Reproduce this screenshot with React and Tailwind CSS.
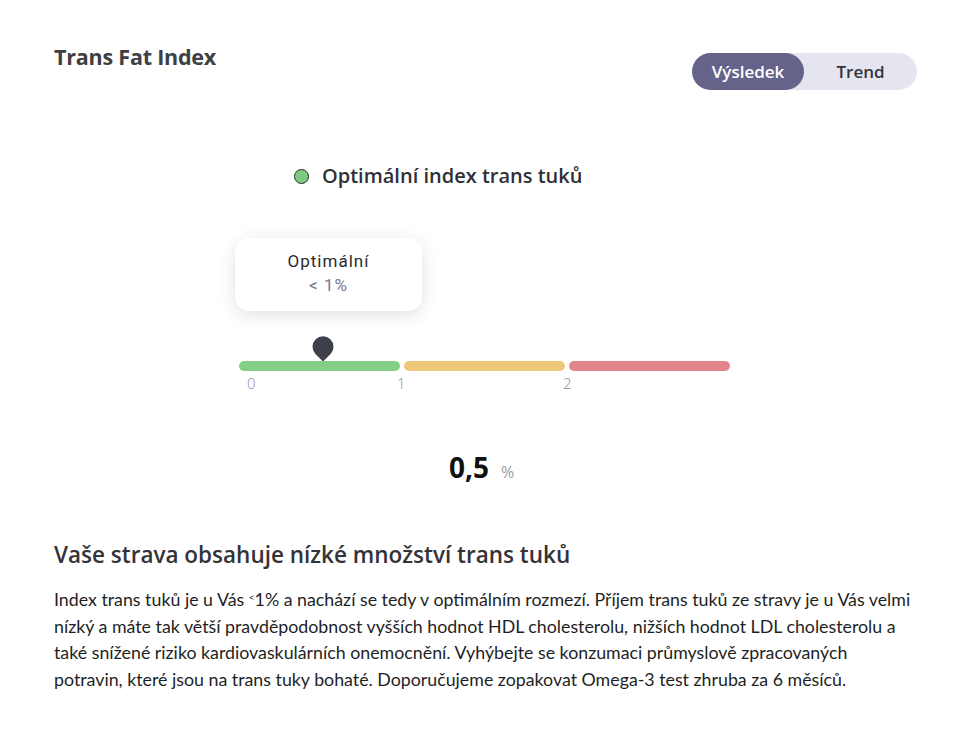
import { useState } from "react";

const segments = [
  { color: "bg-[#84cf86]", label: "0" },
  { color: "bg-[#efc97b]", label: "1" },
  { color: "bg-[#e2868b]", label: "2" },
];

function Toggle() {
  const [tab, setTab] = useState("result");
  return (
    <div className="flex h-[37px] w-[225px] items-center rounded-full bg-[#e4e5ee] font-['Open_Sans',sans-serif] text-[17px] font-semibold">
      <button
        onClick={() => setTab("result")}
        className={`h-full w-[112px] rounded-full ${tab === "result" ? "bg-[#65638a] text-white" : "text-[#34343c]"}`}
      >
        Výsledek
      </button>
      <button
        onClick={() => setTab("trend")}
        className={`h-full flex-1 rounded-full ${tab === "trend" ? "bg-[#65638a] text-white" : "text-[#34343c]"}`}
      >
        Trend
      </button>
    </div>
  );
}

function Pin() {
  return (
    <svg width="28" height="32" viewBox="0 0 28 32" className="block">
      <path
        d="M14 30 L5.5 21.5 A11.5 11.5 0 1 1 22.5 21.5 Z"
        fill="#3d3f4b"
        stroke="#ffffff"
        strokeWidth="2"
        strokeLinejoin="miter"
      />
    </svg>
  );
}

function Scale() {
  return (
    <div className="ml-[185px] w-[491px]">
      <div className="ml-[-4px] w-[187px] rounded-[14px] bg-white pb-[14px] pt-[11px] text-center font-['Roboto',sans-serif] shadow-[0_4px_18px_rgba(0,0,0,0.12)]">
        <div className="text-[17px] leading-[24px] tracking-[0.06em] text-[#2a2a2a]">Optimální</div>
        <div className="text-[17px] leading-[24px] tracking-[0.06em] text-[#7a7890]">&lt; 1%</div>
      </div>
      <div className="ml-[70px] mt-[22px] h-[30px]">
        <Pin />
      </div>
      <div className="mt-[-2px] flex gap-[4px]">
        {segments.map((s) => (
          <div key={s.label} className="flex-1">
            <div className={`h-[10px] rounded-full ${s.color}`} />
          </div>
        ))}
      </div>
      <div className="relative h-[24px] font-['Open_Sans',sans-serif] text-[15px] font-light text-[#8f8f98]">
        <span className="absolute left-[8px] top-[1px]">0</span>
        <span className="absolute left-[158px] top-[1px]">1</span>
        <span className="absolute left-[324px] top-[1px]">2</span>
      </div>
    </div>
  );
}

export default function App() {
  return (
    <div className="min-h-[734px] w-[980px] bg-white px-[54px] pt-[41px] text-[#333]">
      <div className="flex items-start justify-between pr-[9px]">
        <h1 className="font-['Open_Sans',sans-serif] text-[21.5px] font-bold leading-[32px] tracking-[-0.01em] text-[#3f3f44]">
          Trans Fat Index
        </h1>
        <div className="mt-[12px]">
          <Toggle />
        </div>
      </div>

      <div className="ml-[240px] mt-[71px] flex items-center gap-[13px] font-['Open_Sans',sans-serif] text-[20px] font-semibold text-[#2f3036]">
        <span className="h-[15px] w-[15px] rounded-full border-[1.5px] border-[#2d2d2d] bg-[#7dcb80]" />
        <span>Optimální index trans tuků</span>
      </div>

      <div className="mt-[47px]">
        <Scale />
      </div>

      <div className="ml-[395px] mt-[51px] flex items-baseline gap-[12px] font-['Open_Sans',sans-serif]">
        <span className="text-[28px] font-bold text-[#111]">0,5</span>
        <span className="text-[16px] text-[#9a9a9a]">%</span>
      </div>

      <h2 className="mt-[51px] font-['Open_Sans',sans-serif] text-[22.5px] font-semibold leading-[32px] text-[#333338]">
        Vaše strava obsahuje nízké množství trans tuků
      </h2>
      <p className="mt-[15px] font-['Lato',sans-serif] text-[17.8px] leading-[26.7px] text-[#1f1f1f]">
        Index trans tuků je u Vás <sup className="text-[10px]">&lt;</sup>1% a nachází se tedy v optimálním rozmezí. Příjem trans tuků ze stravy je u Vás velmi
        <br />
        nízký a máte tak větší pravděpodobnost vyšších hodnot HDL cholesterolu, nižších hodnot LDL cholesterolu a
        <br />
        také snížené riziko kardiovaskulárních onemocnění. Vyhýbejte se konzumaci průmyslově zpracovaných
        <br />
        potravin, které jsou na trans tuky bohaté. Doporučujeme zopakovat Omega-3 test zhruba za 6 měsíců.
      </p>
    </div>
  );
}
